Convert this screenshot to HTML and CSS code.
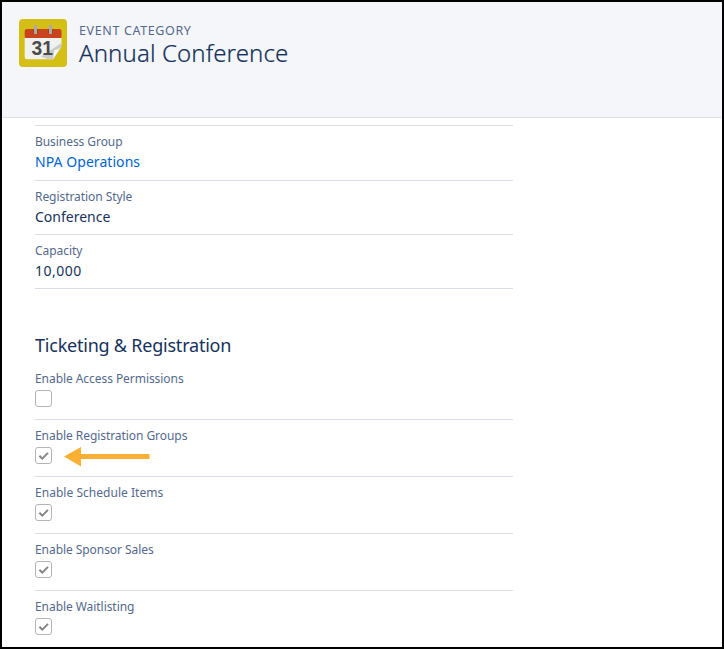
FILE: index.html
```html
<!DOCTYPE html>
<html lang="en">
<head>
<meta charset="utf-8">
<title>Annual Conference</title>
<link rel="stylesheet" href="styles.css">
</head>
<body>
<svg class="defs" width="0" height="0" aria-hidden="true">
  <symbol id="check" viewBox="0 0 17 17"><path d="M4.4 8.8 7.3 11.7 13 5.9" fill="none" stroke="#858585" stroke-width="2"/></symbol>
</svg>
<div class="page">
  <header class="header">
    <svg class="icon" viewBox="0 0 48 48">
      <rect width="48" height="48" rx="4" fill="#d3bf15"/>
      <path d="M5.7 17H42.5V26L34 40.3H8Q5.7 40.3 5.7 38Z" fill="#f1f1f0"/>
      <path d="M42.5 24 22 37.5 29 40.3H34L42.5 28Z" fill="#cbcbc9"/>
      <path d="M5.7 19V12Q5.7 10 8 10H40.3Q42.5 10 42.5 12V19Z" fill="#c9431f"/>
      <path d="M14 10h5v4q-2.5 2.5-5 0zM29 10h5v4q-2.5 2.5-5 0z" fill="#ad3a1b"/>
      <path d="M15 6h3v9h-3zM30 6h3v9h-3z" fill="#aaa"/>
      <text x="12.5" y="36.3" class="day" textLength="21.5" lengthAdjust="spacingAndGlyphs">31</text>
      <path d="M42.5 27 34 40.3 35.5 31Q40 31 42.5 27Z" fill="#fafaf8"/>
    </svg>
    <div class="heading">
      <p class="eyebrow">EVENT CATEGORY</p>
      <h1 class="title">Annual Conference</h1>
    </div>
  </header>
  <main class="details">
    <section class="fields">
      <div class="field first"><div class="label">Business Group</div><a class="value link">NPA Operations</a></div>
      <div class="field"><div class="label">Registration Style</div><div class="value">Conference</div></div>
      <div class="field"><div class="label">Capacity</div><div class="value number">10,000</div></div>
    </section>
    <h2 class="section-title">Ticketing &amp; Registration</h2>
    <section>
      <div class="option"><div class="label">Enable Access Permissions</div><span class="box"></span></div>
      <div class="option"><div class="label">Enable Registration Groups</div><span class="box"><svg><use href="#check"/></svg></span>
        <svg class="arrow" viewBox="0 0 86 20"><path d="M0 9.5 17 0V7H85.500V12H17V19.500Z" fill="#fbb034"/></svg></div>
      <div class="option"><div class="label wide">Enable Schedule Items</div><span class="box"><svg><use href="#check"/></svg></span></div>
      <div class="option"><div class="label">Enable Sponsor Sales</div><span class="box"><svg><use href="#check"/></svg></span></div>
      <div class="option"><div class="label">Enable Waitlisting</div><span class="box"><svg><use href="#check"/></svg></span></div>
    </section>
  </main>
</div>
</body>
</html>
```
FILE: styles.css
```css
* { box-sizing: border-box; }
body { margin: 0; font-family: "Noto Sans", sans-serif; color: #16325c; background: #fff; }
.defs { position: absolute; }
.page { height: 649px; border: 2px solid #000; overflow: hidden; }
.header { height: 116px; display: flex; align-items: flex-start; gap: 12px; padding: 17px; background: #f4f6fa; border-bottom: 1px solid #d8dde6; }
.icon { width: 48px; height: 48px; flex: none; }
.day { font: 700 20.5px "Liberation Sans", sans-serif; fill: #4b4b4b; }
.eyebrow { margin: 5px 0 0; font-size: 12.5px; line-height: 14px; color: #54698d; letter-spacing: .63px; }
.title { margin: 0; font-size: 24px; line-height: 30px; font-weight: 300; letter-spacing: .11px; -webkit-text-stroke: .2px #16325c; }
.details { width: 478px; margin: 7px 0 0 33px; }
.fields { border-top: 1px solid #d8dde6; }
.field { height: 54px; padding-top: 6px; border-bottom: 1px solid #d8dde6; }
.first { height: 55px; }
.label { font-size: 12px; line-height: 20px; color: #54698d; white-space: nowrap; letter-spacing: -.06px; }
.wide { letter-spacing: .03px; }
.value { display: block; font-size: 14px; line-height: 20px; }
.number { letter-spacing: .5px; }
.link { color: #0064d2; letter-spacing: .06px; }
.section-title { margin: 42px 0 1px; font-size: 18px; line-height: 28px; font-weight: 400; letter-spacing: -.22px; }
.option { position: relative; height: 57px; padding-top: 6px; border-bottom: 1px solid #d8dde6; }
.option:first-child { height: 60px; padding-top: 9px; }
.option:last-child { border-bottom: 0; }
.box { display: block; width: 17px; height: 17px; margin-top: 1px; border: 1px solid #b4b4b4; border-radius: 3px; background: #fff; }
.box svg { display: block; width: 17px; height: 17px; margin: -1px; }
.arrow { position: absolute; left: 29px; top: 27px; width: 86px; height: 20px; }
```
